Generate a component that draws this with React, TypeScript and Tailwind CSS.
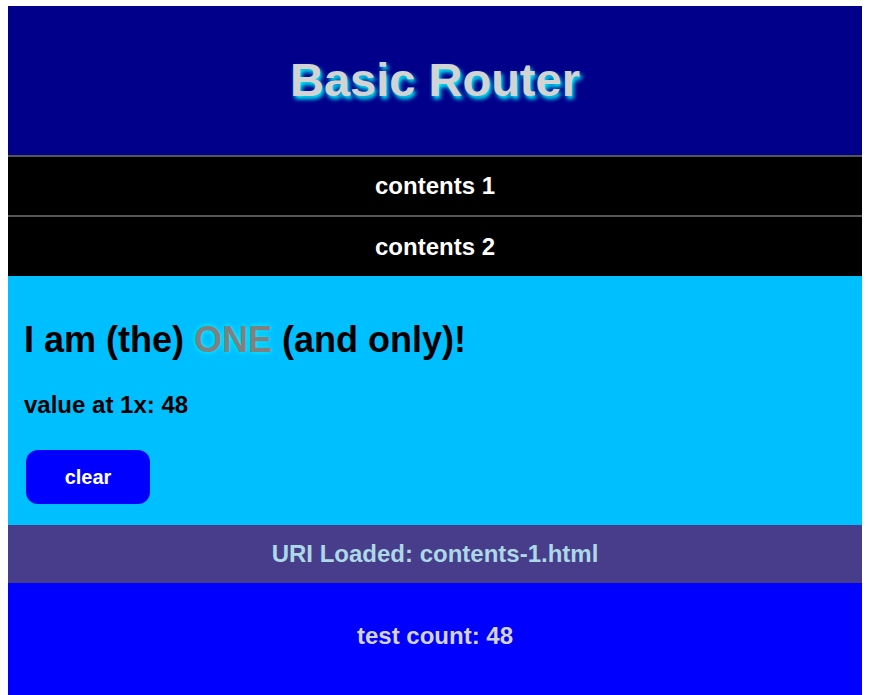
import { useState } from "react";

const font = "font-['Liberation_Sans',Arial,sans-serif]";

export default function App() {
    const [count, setCount] = useState<number>(48);

    return (
        <div className={`px-2 pt-[6px] ${font} font-bold`}>
            <header className="h-[149px] bg-[#00008b] flex items-center justify-center pb-[2px]">
                <h1 className="text-[47px] leading-[52px] text-[#d3d3d3] [text-shadow:2px_3px_4px_#00ffff]">
                    Basic Router
                </h1>
            </header>

            <nav>
                <ul>
                    <li className="border-t-2 border-[#555555] bg-black h-[60px] flex items-center justify-center">
                        <a href="#" className="text-white text-[24px] leading-[28px]">contents 1</a>
                    </li>
                    <li className="border-t-2 border-[#555555] bg-black h-[61px] flex items-center justify-center">
                        <a href="#" className="text-white text-[24px] leading-[28px]">contents 2</a>
                    </li>
                </ul>
            </nav>

            <main className="bg-[#00bfff] h-[249px] pl-4 pt-[44px]">
                <h2 className="text-[36px] leading-[40px] text-black">
                    I am (the) <span className="text-[#808080] [text-shadow:0_0_5px_#00ffff]">ONE</span> (and only)!
                </h2>
                <p className="mt-[31px] text-[24px] leading-[28px] text-black">value at 1x: {count}</p>
                <button
                    onClick={() => setCount(0)}
                    className="mt-[31px] ml-[2px] w-[124px] h-[54px] rounded-xl bg-[#0000ff] text-white text-[20px] leading-[24px]"
                >
                    clear
                </button>
            </main>

            <section className="bg-[#483d8b] h-[58px] flex items-center justify-center">
                <p className="text-[#add8e6] text-[24px] leading-[28px]">URI Loaded: contents-1.html</p>
            </section>

            <footer className="bg-[#0000ff] h-[112px] pt-[39px] text-center">
                <p className="text-[#d3d3d3] text-[24px] leading-[28px]">test count: {count}</p>
            </footer>
        </div>
    );
}
